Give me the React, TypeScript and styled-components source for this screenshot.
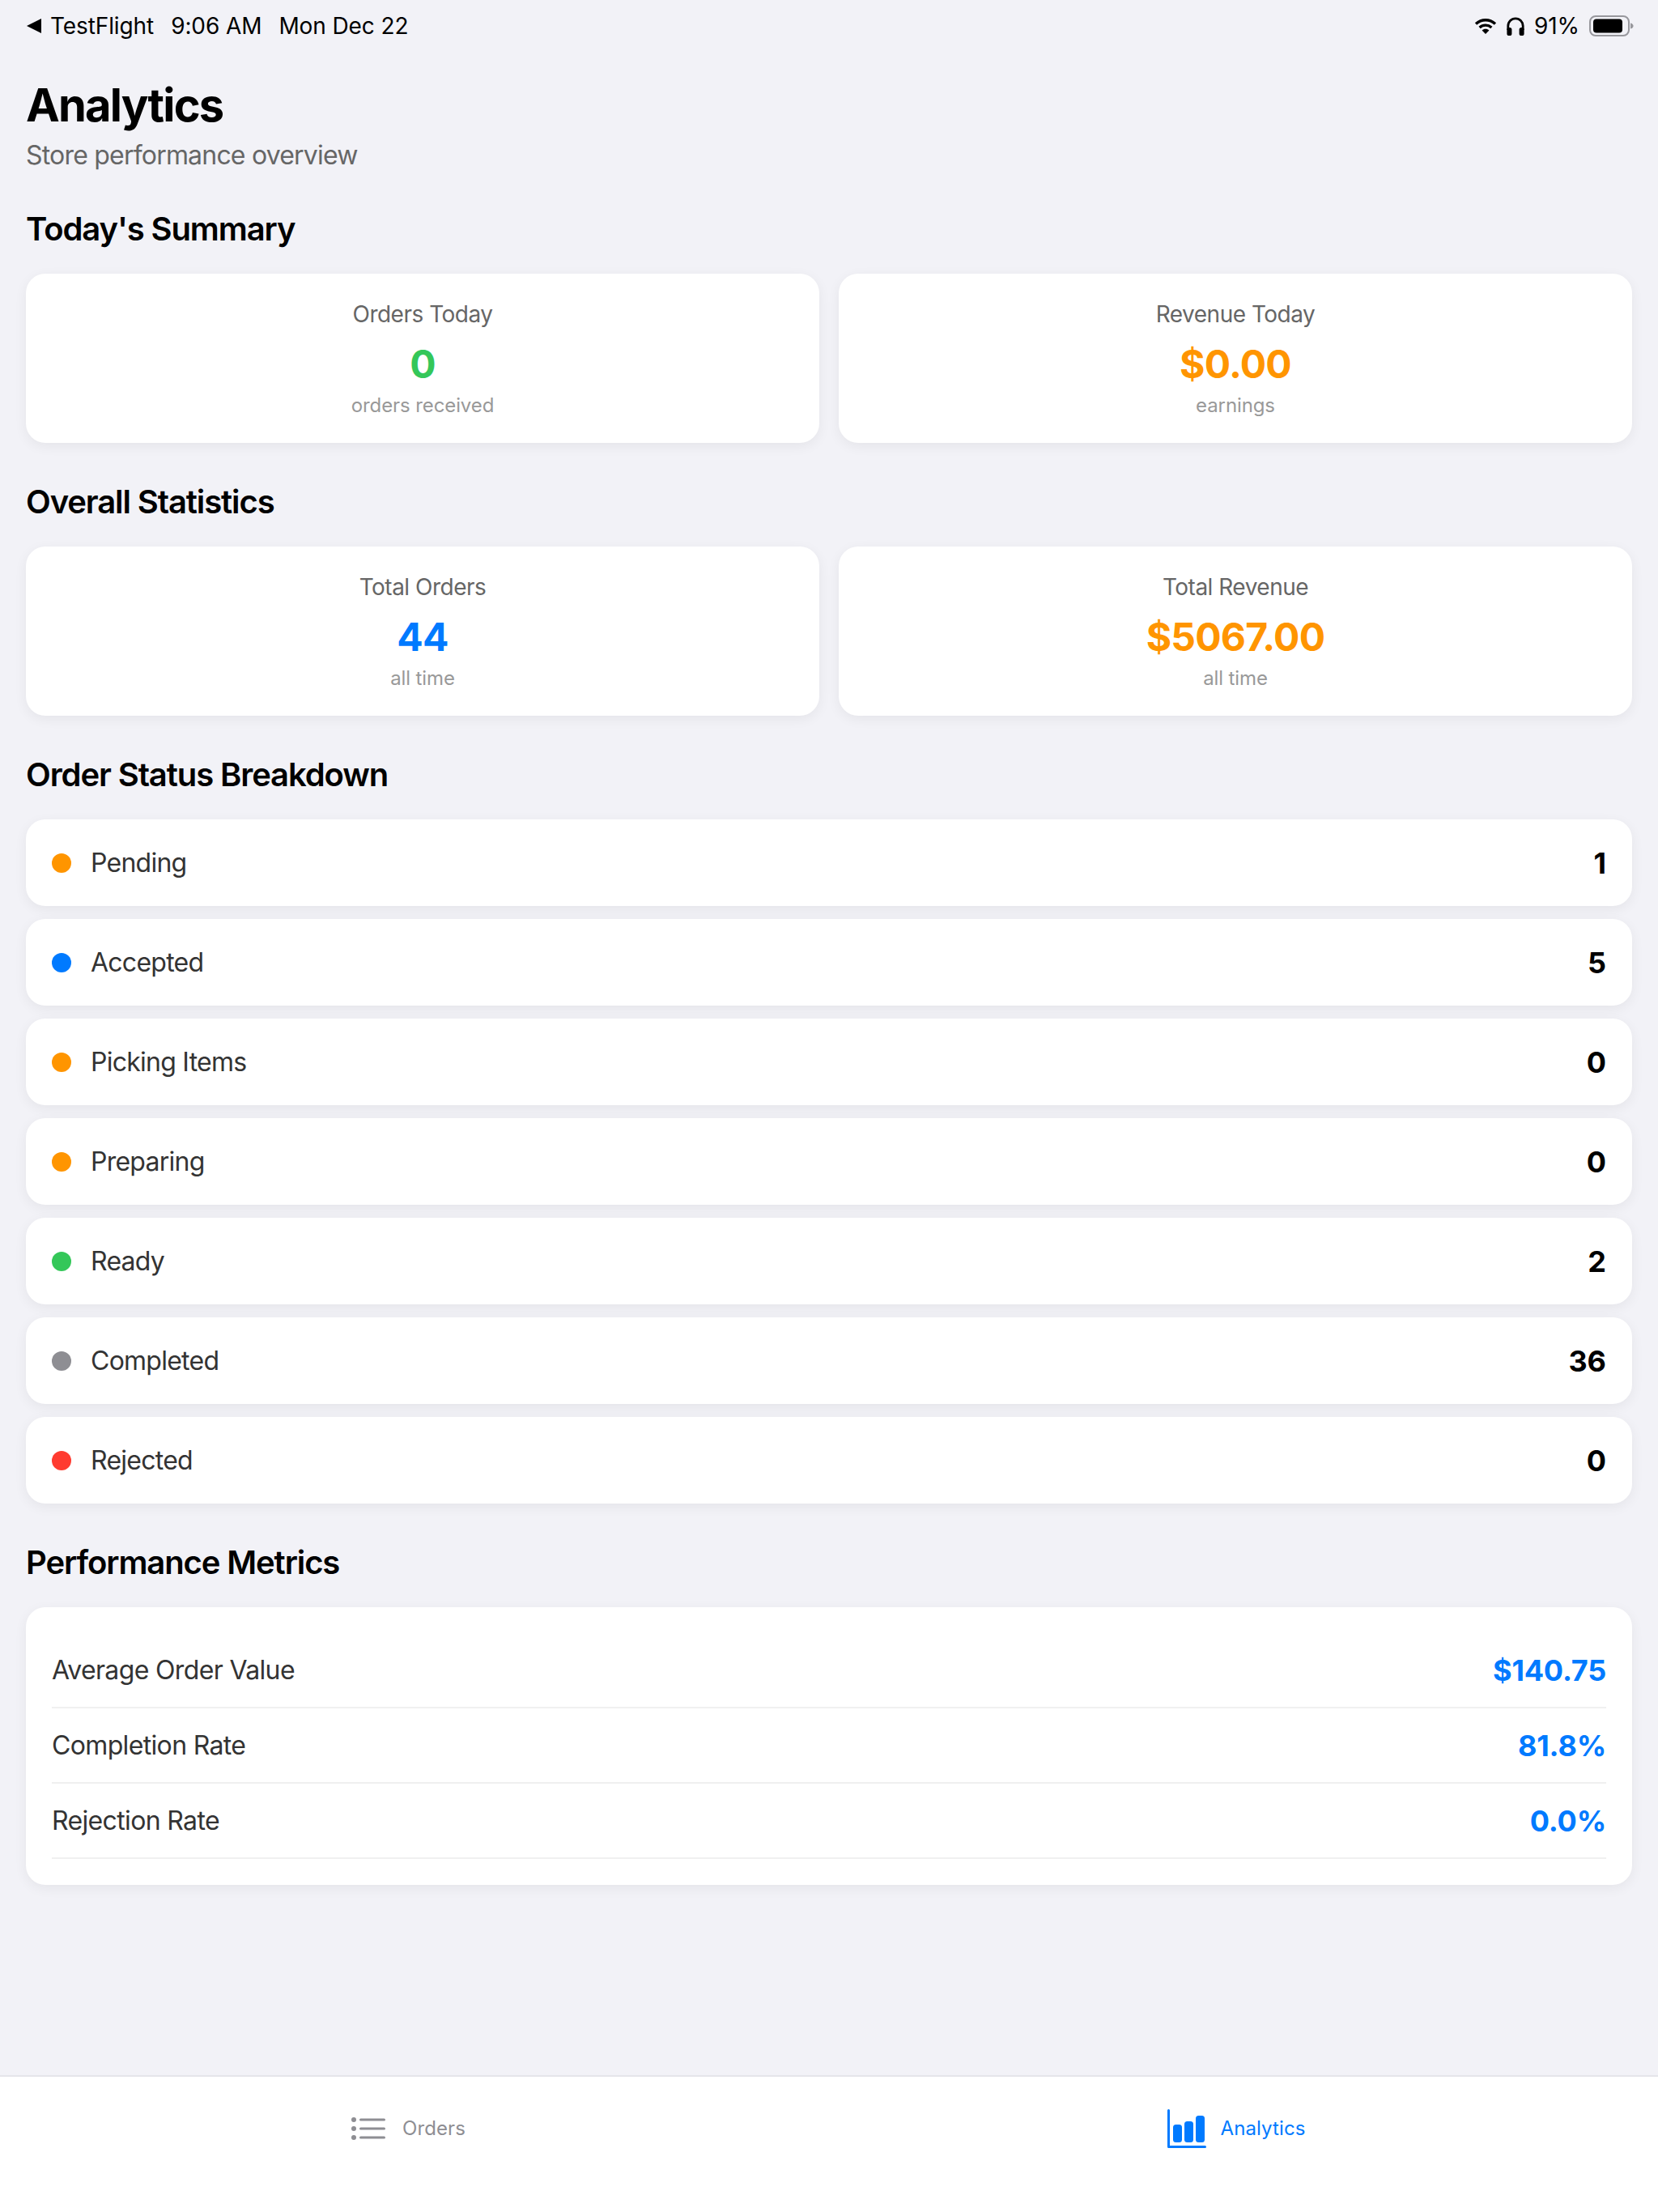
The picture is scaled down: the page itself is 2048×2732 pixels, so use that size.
import React from 'react';

import styled, { createGlobalStyle } from 'styled-components';

const GlobalStyle = createGlobalStyle`
  html, body {
    margin: 0;
    padding: 0;
    background: #f2f2f7;
    font-family: Inter, "Liberation Sans", sans-serif;
  }
`;

const summary = [
  { title: 'Orders Today', value: '0', note: 'orders received', color: '#34c759' },
  { title: 'Revenue Today', value: '$0.00', note: 'earnings', color: '#ff9500' },
];

const overall = [
  { title: 'Total Orders', value: '44', note: 'all time', color: '#007aff' },
  { title: 'Total Revenue', value: '$5067.00', note: 'all time', color: '#ff9500' },
];

const statuses = [
  { name: 'Pending', count: 1, color: '#ff9500' },
  { name: 'Accepted', count: 5, color: '#007aff' },
  { name: 'Picking Items', count: 0, color: '#ff9500' },
  { name: 'Preparing', count: 0, color: '#ff9500' },
  { name: 'Ready', count: 2, color: '#34c759' },
  { name: 'Completed', count: 36, color: '#8e8e93' },
  { name: 'Rejected', count: 0, color: '#ff3b30' },
];

const metrics = [
  { name: 'Average Order Value', value: '$140.75' },
  { name: 'Completion Rate', value: '81.8%' },
  { name: 'Rejection Rate', value: '0.0%' },
];

const WifiIcon = () => (
  <svg width="28" height="20" viewBox="0 0 28 20">
    <path d="M2 7.5C9 1.2 19 1.2 26 7.5" fill="none" stroke="#000" strokeWidth="3.4" />
    <path d="M6.6 12C11 8.2 17 8.2 21.4 12" fill="none" stroke="#000" strokeWidth="3.4" />
    <path d="M14 20L9.6 15.4C12 13.3 16 13.3 18.4 15.4Z" fill="#000" />
  </svg>
);

const HeadphonesIcon = () => (
  <svg width="22" height="23" viewBox="0 0 22 23">
    <path d="M1.8 16V11a9.2 9.2 0 0 1 18.4 0v5" fill="none" stroke="#000" strokeWidth="2.8" />
    <rect x="0.4" y="13" width="6" height="10" rx="2.6" fill="#000" />
    <rect x="15.6" y="13" width="6" height="10" rx="2.6" fill="#000" />
  </svg>
);

const BatteryIcon = () => (
  <svg width="55" height="26" viewBox="0 0 55 26">
    <rect x="1" y="1" width="48" height="24" rx="7" fill="none" stroke="#98989d" strokeWidth="2" />
    <rect x="5" y="4.5" width="36" height="17" rx="4" fill="#000" />
    <path d="M51 9.5c2.4.5 3.6 2 3.6 3.5s-1.2 3-3.6 3.5Z" fill="#98989d" />
  </svg>
);

const ListIcon = () => (
  <svg width="42" height="30" viewBox="0 0 42 30">
    <g fill="#8e8e93">
      <circle cx="3" cy="4" r="3" />
      <circle cx="3" cy="15" r="3" />
      <circle cx="3" cy="26" r="3" />
    </g>
    <g stroke="#8e8e93" strokeWidth="3" strokeLinecap="round">
      <path d="M11.5 4H40.5" />
      <path d="M11.5 15H40.5" />
      <path d="M11.5 26H40.5" />
    </g>
  </svg>
);

const ChartIcon = () => (
  <svg width="48" height="48" viewBox="0 0 48 48">
    <path
      d="M1.5 1.5V46.5H46.5"
      fill="none"
      stroke="#007aff"
      strokeWidth="3"
      strokeLinecap="round"
      strokeLinejoin="round"
    />
    <g fill="#007aff">
      <rect x="7" y="19" width="11" height="22" rx="3.5" />
      <rect x="21" y="15" width="11" height="26" rx="3.5" />
      <rect x="35" y="8" width="11" height="33" rx="3.5" />
    </g>
  </svg>
);

const StatCards = ({ items }: { items: typeof summary }) => (
  <CardGrid>
    {items.map(el => (
      <StatCard key={el.title}>
        <StatTitle>{el.title}</StatTitle>
        <StatValue $color={el.color}>{el.value}</StatValue>
        <StatNote>{el.note}</StatNote>
      </StatCard>
    ))}
  </CardGrid>
);

export default function App() {
  return (
    <Page>
      <GlobalStyle />
      <StatusBar>
        <StatusGroup>
          <BackArrow />
          <StatusText>TestFlight</StatusText>
          <StatusText>9:06 AM</StatusText>
          <StatusText>Mon Dec 22</StatusText>
        </StatusGroup>
        <StatusIcons>
          <WifiIcon />
          <HeadphonesIcon />
          <StatusText>91%</StatusText>
          <BatteryIcon />
        </StatusIcons>
      </StatusBar>

      <Content>
        <Header>
          <PageTitle>Analytics</PageTitle>
          <PageSubtitle>Store performance overview</PageSubtitle>
        </Header>

        <Section>
          <SectionTitle>Today's Summary</SectionTitle>
          <StatCards items={summary} />
        </Section>

        <Section>
          <SectionTitle>Overall Statistics</SectionTitle>
          <StatCards items={overall} />
        </Section>

        <Section>
          <SectionTitle>Order Status Breakdown</SectionTitle>
          <StatusList>
            {statuses.map(el => (
              <StatusRow key={el.name}>
                <StatusDot $color={el.color} />
                <StatusName>{el.name}</StatusName>
                <StatusCount>{el.count}</StatusCount>
              </StatusRow>
            ))}
          </StatusList>
        </Section>

        <Section>
          <SectionTitle>Performance Metrics</SectionTitle>
          <MetricsCard>
            {metrics.map(el => (
              <MetricRow key={el.name}>
                <MetricName>{el.name}</MetricName>
                <MetricValue>{el.value}</MetricValue>
              </MetricRow>
            ))}
          </MetricsCard>
        </Section>
      </Content>

      <TabBar>
        <Tab>
          <TabIcon>
            <ListIcon />
          </TabIcon>
          <TabLabel $active={false}>Orders</TabLabel>
        </Tab>
        <Tab>
          <TabIcon>
            <ChartIcon />
          </TabIcon>
          <TabLabel $active>Analytics</TabLabel>
        </Tab>
      </TabBar>
    </Page>
  );
}

const Page = styled.div`
  display: flex;
  flex-direction: column;
  min-height: 2732px;
  background: #f2f2f7;
`;

const StatusBar = styled.header`
  display: flex;
  align-items: center;
  justify-content: space-between;
  height: 64px;
  padding: 0 30px 0 33px;
`;

const StatusGroup = styled.div`
  display: flex;
  align-items: center;
  gap: 21px;
`;

const BackArrow = styled.span`
  width: 0;
  height: 0;
  margin-right: -10px;
  border-top: 9px solid transparent;
  border-bottom: 9px solid transparent;
  border-right: 18px solid #000;
`;

const StatusText = styled.span`
  font-size: 28px;
  line-height: 32px;
  letter-spacing: -0.1px;
  color: #000;
`;

const StatusIcons = styled.div`
  display: flex;
  align-items: center;
  gap: 12px;
`;

const Content = styled.main`
  flex: 1;
  display: flex;
  flex-direction: column;
  gap: 49px;
  padding: 32px 32px 0;
`;

const Header = styled.div`
  display: flex;
  flex-direction: column;
  gap: 10px;
`;

const PageTitle = styled.h1`
  margin: 0;
  font-size: 56px;
  line-height: 68px;
  font-weight: 700;
  letter-spacing: -1.8px;
  color: #000;
`;

const PageSubtitle = styled.p`
  margin: 0;
  font-size: 32px;
  line-height: 36px;
  letter-spacing: -0.8px;
  color: #666;
`;

const Section = styled.section`
  display: flex;
  flex-direction: column;
  gap: 31px;
`;

const SectionTitle = styled.h2`
  margin: 0;
  font-size: 40px;
  line-height: 48px;
  font-weight: 600;
  letter-spacing: -1.1px;
  color: #000;
`;

const CardGrid = styled.div`
  display: grid;
  grid-template-columns: 1fr 1fr;
  gap: 24px;
`;

const StatCard = styled.article`
  display: flex;
  flex-direction: column;
  align-items: center;
  height: 209px;
  box-sizing: border-box;
  padding-top: 32px;
  background: #fff;
  border-radius: 24px;
  box-shadow: 0 4px 16px rgba(0, 0, 0, 0.06);
`;

const StatTitle = styled.span`
  font-size: 28px;
  line-height: 36px;
  letter-spacing: -0.5px;
  color: #666;
`;

const StatValue = styled.span<{ $color: string }>`
  margin-top: 15px;
  font-size: 48px;
  line-height: 58px;
  font-weight: 700;
  letter-spacing: -0.8px;
  color: ${p => p.$color};
`;

const StatNote = styled.span`
  margin-top: 7px;
  font-size: 24px;
  line-height: 30px;
  letter-spacing: -0.1px;
  color: #999;
`;

const StatusList = styled.div`
  display: flex;
  flex-direction: column;
  gap: 16px;
`;

const StatusRow = styled.div`
  display: flex;
  align-items: center;
  height: 107px;
  padding: 0 32px;
  background: #fff;
  border-radius: 24px;
  box-shadow: 0 4px 16px rgba(0, 0, 0, 0.06);
`;

const StatusDot = styled.span<{ $color: string }>`
  width: 24px;
  height: 24px;
  margin-right: 24px;
  border-radius: 50%;
  background: ${p => p.$color};
`;

const StatusName = styled.span`
  flex: 1;
  font-size: 32px;
  line-height: 40px;
  letter-spacing: -0.75px;
  color: #333;
`;

const StatusCount = styled.span`
  font-size: 36px;
  line-height: 44px;
  font-weight: 700;
  color: #000;
`;

const MetricsCard = styled.div`
  display: flex;
  flex-direction: column;
  padding: 32px;
  background: #fff;
  border-radius: 24px;
  box-shadow: 0 4px 16px rgba(0, 0, 0, 0.06);
`;

const MetricRow = styled.div`
  display: flex;
  align-items: center;
  justify-content: space-between;
  height: 93px;
  box-sizing: border-box;
  border-bottom: 2px solid #f0f0f0;
`;

const MetricName = styled.span`
  font-size: 32px;
  line-height: 40px;
  letter-spacing: -0.65px;
  color: #333;
`;

const MetricValue = styled.span`
  font-size: 36px;
  line-height: 44px;
  font-weight: 700;
  letter-spacing: -0.2px;
  color: #007aff;
`;

const TabBar = styled.nav`
  display: grid;
  grid-template-columns: 1fr 1fr;
  height: 169px;
  box-sizing: border-box;
  padding-bottom: 40px;
  background: #fff;
  border-top: 2px solid #e5e5ea;
`;

const Tab = styled.div`
  display: flex;
  align-items: center;
  justify-content: center;
  gap: 18px;
  padding-right: 18px;
`;

const TabIcon = styled.span`
  display: flex;
  align-items: center;
  justify-content: center;
  width: 48px;
`;

const TabLabel = styled.span<{ $active: boolean }>`
  font-size: 24px;
  line-height: 30px;
  font-weight: 400;
  letter-spacing: 0.1px;
  color: ${p => (p.$active ? '#007aff' : '#8e8e93')};
`;
